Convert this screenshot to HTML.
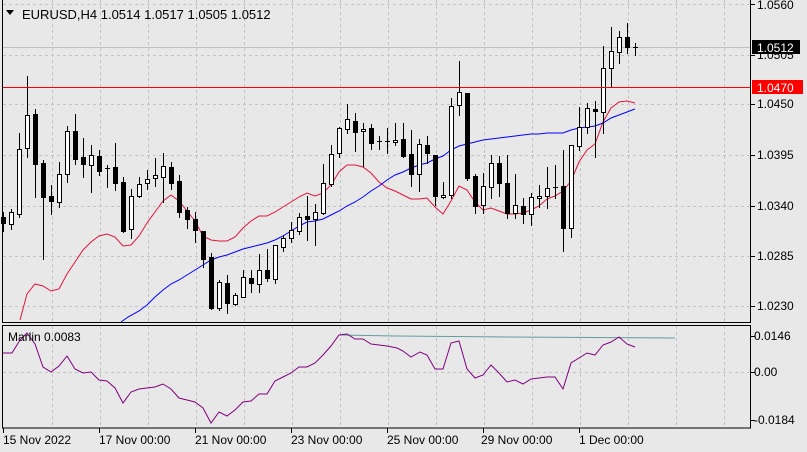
<!DOCTYPE html>
<html><head><meta charset="utf-8"><style>
html,body{margin:0;padding:0;background:#e8e8e8;width:807px;height:452px;overflow:hidden}
svg{display:block;font-family:"Liberation Sans",sans-serif}
</style></head><body>
<svg id="s" width="807" height="452" xmlns="http://www.w3.org/2000/svg">
<rect width="807" height="452" fill="#e8e8e8"/>
<g id="grid" stroke="#c4c4c4" stroke-dasharray="3,3" stroke-width="1"></g>
<rect x="3" y="47" width="747" height="1" fill="#c0c0c0"/>
<g id="ma"></g>
<g id="c"></g>
<rect x="3" y="87" width="747" height="1" fill="#ff0000"/>
<polyline points="340,335 396,336 508,337 675,338" fill="none" stroke="#5f9ea0"/>
<polyline id="ind" fill="none" stroke="#800080"/>
<rect x="2.5" y="-1" width="748" height="323.5" fill="none" stroke="#000"/>
<rect x="2.5" y="325.5" width="748" height="102.5" fill="none" stroke="#000"/>
<g id="ticks" stroke="#000"></g>
<g font-size="12" fill="#000">
<text x="22" y="19" font-size="13">EURUSD,H4  1.0514 1.0517 1.0505 1.0512</text>
<text x="8" y="341">Marlin 0.0083</text>
<text x="757" y="9">1.0560</text>
<text x="757" y="59">1.0505</text>
<text x="757" y="108">1.0450</text>
<text x="757" y="159">1.0395</text>
<text x="757" y="210">1.0340</text>
<text x="757" y="260">1.0285</text>
<text x="757" y="310">1.0230</text>
<text x="754" y="340">0.0146</text>
<text x="754" y="376">0.00</text>
<text x="754" y="424">-0.0184</text>
<text x="3" y="444">15 Nov 2022</text>
<text x="99" y="444">17 Nov 00:00</text>
<text x="195" y="444">21 Nov 00:00</text>
<text x="291" y="444">23 Nov 00:00</text>
<text x="387" y="444">25 Nov 00:00</text>
<text x="481" y="444">29 Nov 00:00</text>
<text x="579" y="444">1 Dec 00:00</text>
</g>
<polygon points="6,10 14,10 10,15" fill="#000"/>
<rect x="752" y="40" width="48" height="14" fill="#000"/>
<text x="757" y="52" font-size="12" fill="#fff">1.0512</text>
<rect x="752" y="80" width="51" height="14" fill="#ff0000"/>
<text x="757" y="92" font-size="12" fill="#fff">1.0470</text>
</svg>
<script>
var NS="http://www.w3.org/2000/svg";
function el(p,t,a){var e=document.createElementNS(NS,t);for(var k in a)e.setAttribute(k,a[k]);document.getElementById(p).appendChild(e);return e;}
[52,100,148,196,244,292,340,388,436,484,532,580,628,676,724].forEach(function(x){
 el("grid","line",{x1:x+.5,y1:0,x2:x+.5,y2:322});el("grid","line",{x1:x+.5,y1:326,x2:x+.5,y2:428});});
[4,55,104,155,206,256,306].forEach(function(y){el("grid","line",{x1:3,y1:y+.5,x2:750,y2:y+.5});
 el("ticks","line",{x1:751,y1:y+.5,x2:755,y2:y+.5});});
el("grid","line",{x1:3,y1:372.5,x2:750,y2:372.5});
[336,372,420].forEach(function(y){el("ticks","line",{x1:751,y1:y+.5,x2:755,y2:y+.5});});
[3,99,195,291,387,483,579].forEach(function(x){el("ticks","line",{x1:x+.5,y1:428,x2:x+.5,y2:433});});
var C=[[217,223,212,231,0],[212,224,209,229,1],[149,214,133,217,1],[115,148,76,157,1],[114,164,109,197,0],[163,197,160,259,0],[196,201,185,214,0],[174,202,162,207,1],[131,174,126,182,1],[131,159,114,164,0],[157,164,138,177,0],[155,165,145,192,1],[156,171,150,175,0],[168,168,165,187,0],[167,183,143,190,0],[182,231,177,232,0],[196,229,189,238,1],[184,196,177,197,1],[179,183,170,189,1],[175,178,158,186,1],[166,177,153,202,1],[167,183,162,189,0],[181,212,175,217,0],[210,219,207,228,0],[219,230,212,242,0],[231,259,231,267,0],[257,308,253,309,0],[282,308,280,310,1],[283,303,275,313,0],[295,304,293,305,1],[277,297,270,297,1],[278,283,270,292,0],[270,284,254,292,1],[270,278,249,281,0],[245,279,245,283,1],[238,247,235,251,1],[230,238,222,242,1],[217,231,213,234,1],[216,219,196,240,0],[212,219,204,245,1],[183,213,164,214,1],[154,184,145,186,1],[128,153,127,157,1],[119,129,104,133,1],[121,132,113,151,0],[129,131,123,166,1],[128,143,124,149,0],[141,141,136,149,0],[141,141,128,153,0],[140,142,123,145,1],[139,156,123,157,0],[154,174,130,186,0],[144,174,139,191,1],[145,153,136,163,0],[155,196,155,205,0],[195,197,182,198,1],[106,195,98,198,1],[92,105,61,115,1],[93,178,93,180,0],[176,206,174,213,0],[186,205,173,213,1],[163,187,155,198,1],[163,183,156,196,0],[183,213,155,218,0],[205,213,174,218,1],[206,214,198,223,0],[197,214,193,225,1],[196,198,185,207,1],[188,196,167,208,1],[187,187,165,198,0],[186,228,150,251,0],[145,228,145,237,1],[127,146,107,150,1],[108,127,103,133,1],[109,111,101,157,0],[68,112,46,133,1],[51,68,27,86,1],[37,52,31,63,1],[37,47,23,53,0],[47,47,43,55,0]];
C.forEach(function(c,i){var x=3+8*i;
 el("c","line",{x1:x+.5,y1:c[2],x2:x+.5,y2:c[3]+1,stroke:"#000"});
 if(c[0]==c[1]){el("c","line",{x1:x-2,y1:c[0]+.5,x2:x+3,y2:c[0]+.5,stroke:"#000"});}
 else if(c[4]){el("c","rect",{x:x-1.5,y:c[0]+.5,width:4,height:c[1]-c[0],fill:"#fff",stroke:"#000"});}
 else{el("c","rect",{x:x-2,y:c[0],width:5,height:c[1]-c[0]+1,fill:"#000"});}
});
var red=[[20,320],[27,294],[35,284],[43,286],[51,291],[59,289],[67,274],[75,262],[83,250],[91,242],[99,236],[107,234],[115,237],[123,246],[131,245],[139,236],[147,223],[155,212],[163,201],[171,195],[179,201],[187,211],[195,221],[203,236],[211,240],[219,241],[227,241],[235,237],[243,228],[251,221],[259,216],[267,216],[275,212],[283,207],[291,202],[299,197],[307,193],[315,196],[323,193],[331,185],[339,172],[347,165],[355,165],[363,167],[371,173],[379,182],[387,188],[395,191],[403,195],[411,199],[419,199],[427,198],[435,207],[443,214],[451,201],[459,186],[467,190],[475,202],[483,210],[491,208],[499,211],[507,214],[515,214],[523,213],[531,210],[539,206],[547,199],[555,196],[563,191],[571,181],[579,162],[587,150],[595,144],[603,122],[611,108],[619,102],[627,101],[635,103]];
var blue=[[121,322],[128,317],[139,311],[147,305],[155,297],[163,290],[171,284],[179,280],[187,275],[195,270],[203,265],[211,260],[219,257],[227,255],[235,252],[243,249],[251,247],[259,245],[267,243],[275,240],[283,236],[291,231],[299,226],[307,222],[315,221],[323,219],[331,215],[339,211],[347,206],[355,202],[363,197],[371,191],[379,186],[387,180],[395,175],[403,172],[411,168],[419,165],[427,163],[435,159],[443,156],[451,150],[459,146],[467,144],[475,142],[483,140],[491,139],[499,138],[507,137],[515,136],[523,135],[531,134],[539,134],[547,133],[555,133],[563,133],[571,130],[579,128],[587,127],[595,126],[603,123],[611,118],[619,115],[627,112],[635,109]];
el("ma","polyline",{points:red.join(" "),fill:"none",stroke:"#e0143c"});
el("ma","polyline",{points:blue.join(" "),fill:"none",stroke:"#0000ff"});
var ind=[[3,353],[12,353],[20,340],[27,333],[35,344],[43,367],[51,372],[59,366],[67,356],[75,369],[83,373],[91,372],[99,380],[107,381],[115,388],[123,403],[131,392],[139,389],[147,388],[155,387],[163,384],[171,389],[179,398],[187,400],[195,402],[203,408],[211,423],[219,412],[227,416],[235,410],[243,402],[251,401],[259,394],[267,394],[275,381],[283,377],[291,373],[299,367],[307,367],[315,363],[323,355],[331,346],[339,335],[347,334],[355,339],[363,339],[371,344],[379,345],[387,346],[397,348],[403,351],[411,357],[420,352],[427,355],[435,369],[443,369],[451,343],[459,341],[467,369],[475,378],[483,375],[491,365],[499,373],[507,382],[515,380],[523,384],[531,379],[539,378],[547,377],[555,377],[563,389],[571,363],[579,358],[587,353],[595,355],[603,345],[611,342],[619,337],[627,344],[635,347]];
document.getElementById("ind").setAttribute("points",ind.join(" "));
</script>
</body></html>
